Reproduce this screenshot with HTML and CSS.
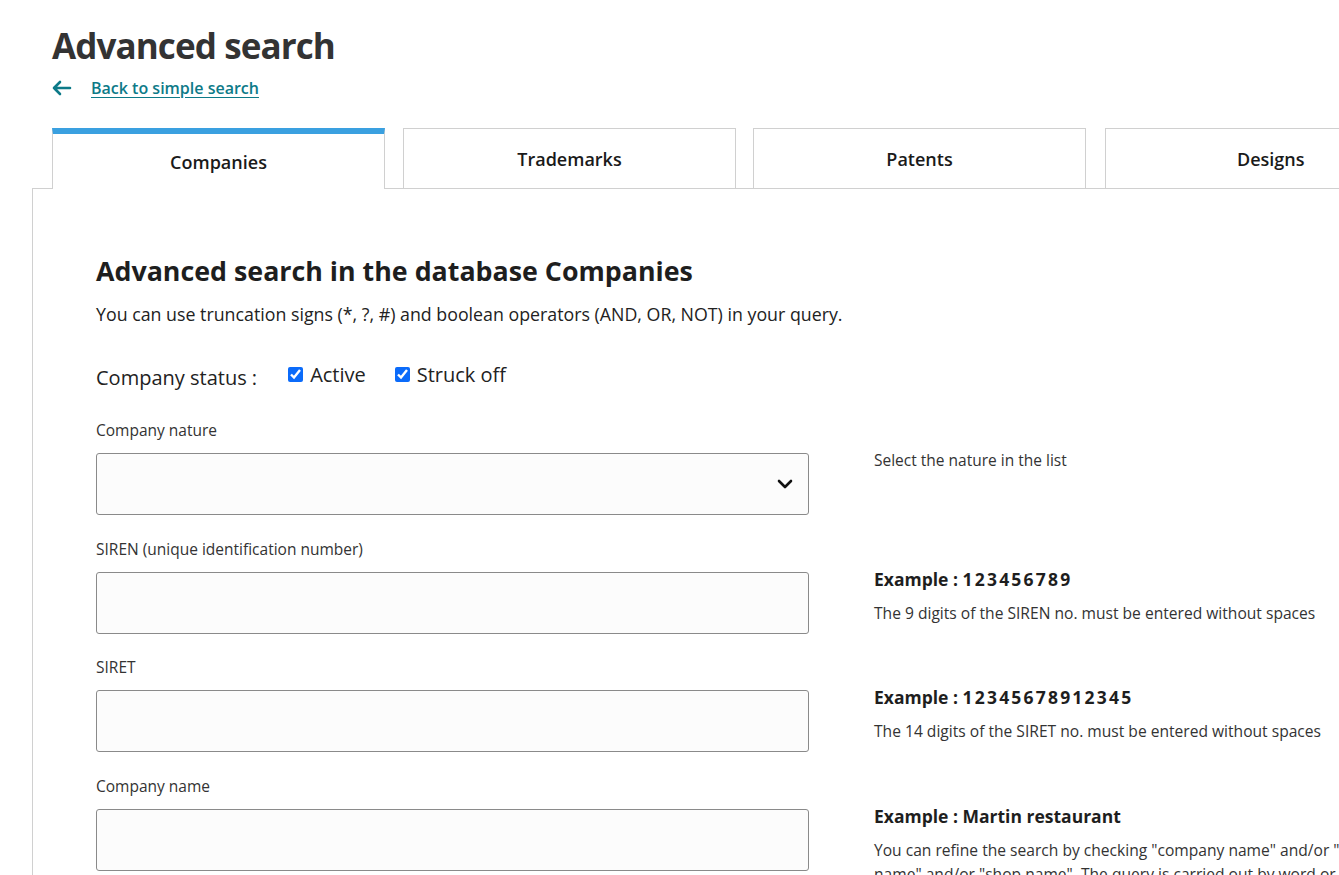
FILE: index.html
```html
<!DOCTYPE html>
<html lang="en">
<head>
<meta charset="utf-8">
<title>Advanced search</title>
<link rel="stylesheet" href="styles.css">
</head>
<body>
<div class="page">
  <header class="head">
    <h1 class="title">Advanced search</h1>
    <a class="back" href="#">
      <svg class="back-icon" width="20" height="16" viewBox="0 0 20 16"><path d="M8 2 L2 8 L8 14 M2 8 H18" fill="none" stroke="#0d7a88" stroke-width="2.6" stroke-linecap="round" stroke-linejoin="round"/></svg>
      <span>Back to simple search</span>
    </a>
  </header>
  <nav class="tabs">
    <div class="tab active">Companies</div>
    <div class="tab">Trademarks</div>
    <div class="tab">Patents</div>
    <div class="tab">Designs</div>
  </nav>
  <section class="panel">
    <h2 class="panel-title">Advanced search in the database Companies</h2>
    <p class="intro">You can use truncation signs (*, ?, #) and boolean operators (AND, OR, NOT) in your query.</p>
    <div class="status">
      <span class="status-label">Company status :</span>
      <label class="check"><input type="checkbox" checked> Active</label>
      <label class="check"><input type="checkbox" checked> Struck off</label>
    </div>
    <div class="form">
      <div class="row">
        <div class="field">
          <label class="lbl">Company nature</label>
          <div class="select">
            <svg width="16" height="10" viewBox="0 0 16 10"><path d="M2 2 L8 8 L14 2" fill="none" stroke="#111" stroke-width="2.6" stroke-linecap="round" stroke-linejoin="round"/></svg>
          </div>
        </div>
        <div class="help help-plain">Select the nature in the list</div>
      </div>
      <div class="row">
        <div class="field">
          <label class="lbl">SIREN (unique identification number)</label>
          <div class="input"></div>
        </div>
        <div class="help">
          <div class="ex">Example : <span class="num">123456789</span></div>
          <div class="desc">The 9 digits of the SIREN no. must be entered without spaces</div>
        </div>
      </div>
      <div class="row">
        <div class="field">
          <label class="lbl">SIRET</label>
          <div class="input"></div>
        </div>
        <div class="help">
          <div class="ex">Example : <span class="num">12345678912345</span></div>
          <div class="desc">The 14 digits of the SIRET no. must be entered without spaces</div>
        </div>
      </div>
      <div class="row">
        <div class="field">
          <label class="lbl">Company name</label>
          <div class="input"></div>
        </div>
        <div class="help">
          <div class="ex">Example : Martin restaurant</div>
          <div class="desc long">You can refine the search by checking "company name" and/or "trade name" and/or "shop name". The query is carried out by word or expression.</div>
        </div>
      </div>
    </div>
  </section>
</div>
</body>
</html>
```

FILE: styles.css
```css
* { box-sizing: border-box; }
html, body { margin: 0; padding: 0; }
body {
  font-family: "Open Sans", "Noto Sans", sans-serif;
  color: #1e1e1e;
  background: #fff;
  overflow: hidden;
  width: 1339px;
  height: 875px;
}
.page { padding-left: 32px; }
.head { padding-left: 20px; padding-top: 22px; }
.title {
  margin: 0;
  font-size: 35px;
  font-weight: 700;
  line-height: 47px;
  color: #333;
  letter-spacing: -0.9px;
}
.back {
  display: flex;
  align-items: center;
  gap: 19px;
  margin-top: 8px;
  color: #0d7a88;
  font-weight: 600;
  font-size: 16px;
  text-decoration: none;
  height: 22px;
}
.back span { text-decoration: underline; text-underline-offset: 3px; }
.back-icon { display: block; }
.tabs {
  display: flex;
  gap: 18px;
  padding-left: 20px;
  margin-top: 29px;
  height: 60px;
  align-items: stretch;
  position: relative;
  z-index: 1;
}
.tab {
  flex: 0 0 333px;
  border: 1px solid #d0d0d0;
  border-bottom: none;
  display: flex;
  align-items: center;
  justify-content: center;
  font-weight: 600;
  font-size: 18px;
  color: #1a1a1a;
  background: #fff;
  padding-top: 1px;
}
.tab:nth-child(3) { margin-left: -1px; }
.tab.active {
  border-top: 6px solid #3aa0e0;
  padding-top: 1px;
  height: 61px;
}
.tab:nth-child(4) { justify-content: flex-start; padding-left: 131px; margin-left: 1px; }
.panel {
  border-top: 1px solid #d0d0d0;
  border-left: 1px solid #d0d0d0;
  padding: 64px 0 0 63px;
  height: 700px;
}
.panel-title {
  margin: 0;
  font-size: 26.8px;
  font-weight: 700;
  line-height: 36px;
  color: #1e1e1e;
}
.intro {
  margin: 12px 0 0;
  font-size: 17.8px;
  line-height: 26px;
  color: #222;
}
.status {
  display: flex;
  align-items: center;
  margin-top: 33px;
  font-size: 20px;
  color: #222;
  height: 30px;
}
.status-label { margin-right: 31px; position: relative; top: 2px; }
.check {
  display: flex;
  align-items: center;
  gap: 7px;
  margin-right: 29px;
  position: relative;
  top: -1px;
}
.check input {
  margin: 0;
  width: 15px;
  height: 15px;
  accent-color: #0b6bfa;
}
.form { margin-top: 30px; }
.row {
  display: grid;
  grid-template-columns: 713px 1fr;
  column-gap: 65px;
  margin-bottom: 23.5px;
}
.lbl {
  display: block;
  font-size: 15.5px;
  line-height: 20px;
  color: #333;
  height: 33px;
}
.select, .input {
  height: 62px;
  border: 1px solid #8a8a8a;
  border-radius: 3px;
  background: #fcfcfc;
}
.select {
  display: flex;
  align-items: center;
  justify-content: flex-end;
  padding-right: 15px;
}
.select svg { display: block; }
.help { padding-top: 28px; white-space: nowrap; }
.help-plain {
  font-size: 15.5px;
  color: #333;
  line-height: 20px;
  padding-top: 30px;
}
.ex {
  font-size: 17.5px;
  font-weight: 700;
  line-height: 24px;
  color: #1e1e1e;
}
.num { letter-spacing: 2.2px; }
.desc {
  margin-top: 10px;
  font-size: 15.6px;
  line-height: 24px;
  color: #333;
}
.desc.long { white-space: normal; width: 520px; }
```
